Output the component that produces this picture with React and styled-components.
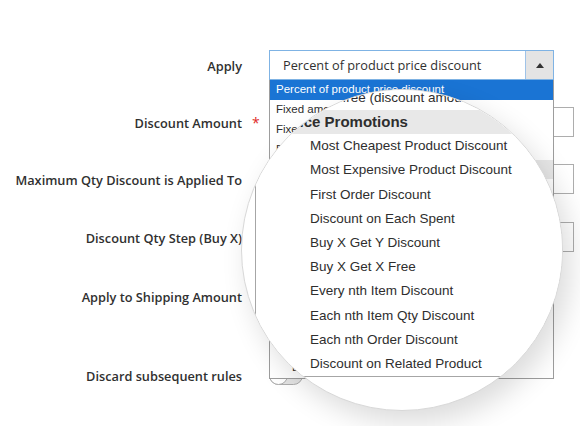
import React from "react";
import styled, { createGlobalStyle } from "styled-components";

const GlobalStyle = createGlobalStyle`
  html, body {
    margin: 0;
    padding: 0;
    background: #fff;
  }
  body {
    width: 580px;
    height: 426px;
    overflow: hidden;
  }
`;

const actions = [
  { label: "Percent of product price discount", kind: "plain", active: true },
  { label: "Fixed amount discount", kind: "plain" },
  { label: "Fixed amount discount for whole cart", kind: "plain" },
  { label: "Buy X get Y free (discount amount is Y)", kind: "plain" },
  { label: "Special Price Promotions", kind: "group" },
  { label: "Most Cheapest Product Discount", kind: "nested" },
  { label: "Most Expensive Product Discount", kind: "nested" },
  { label: "First Order Discount", kind: "nested" },
  { label: "Discount on Each Spent", kind: "nested" },
  { label: "Buy X Get Y Discount", kind: "nested" },
  { label: "Buy X Get X Free", kind: "nested" },
  { label: "Every nth Item Discount", kind: "nested" },
  { label: "Each nth Item Qty Discount", kind: "nested" },
  { label: "Each nth Order Discount", kind: "nested" },
  { label: "Discount on Related Product", kind: "nested" },
];

// popup list metrics, normal and magnified
const normal = { h: 19.9, fs: 11.5, gfs: 11.5, indent: { plain: 6, group: 6, nested: 22 } };
const zoomed = { h: 24.2, fs: 13.5, gfs: 15, indent: { plain: 12, group: -29, nested: 54 } };

const Page = styled.div`
  position: relative;
  width: 580px;
  height: 426px;
  padding-top: 50px;
  box-sizing: border-box;
  font-family: "Open Sans", "Liberation Sans", sans-serif;
  color: #303030;
`;

const Form = styled.div`
  display: flex;
  flex-direction: column;
`;

const Field = styled.div`
  display: grid;
  grid-template-columns: 242px 27px 305px;
  align-items: center;
  min-height: 30px;
  margin-top: ${(p) => p.$gap || 0}px;
`;

const Label = styled.div`
  padding-top: 2px;
  text-align: right;
  font-size: 12.75px;
  font-weight: 600;
  line-height: 18px;
  white-space: nowrap;
`;

const Mark = styled.span`
  padding-left: 10px;
  color: #e02b27;
  font-size: 14px;
`;

const Select = styled.div`
  position: relative;
  width: 285px;
  height: 30px;
`;

const SelectBox = styled.div`
  display: flex;
  height: 30px;
  box-sizing: border-box;
  border: 1px solid #7fb3e4;
  background: #fff;
`;

const SelectValue = styled.div`
  flex: 1;
  display: flex;
  align-items: center;
  padding-left: 13px;
  font-size: 12.75px;
`;

const SelectArrow = styled.div`
  width: 27px;
  display: flex;
  align-items: center;
  justify-content: center;
  background: #e4e4e4;
  border-left: 1px solid #9fc3e8;

  &::before {
    content: "";
    border-left: 4px solid transparent;
    border-right: 4px solid transparent;
    border-bottom: 5px solid #333;
  }
`;

const Popup = styled.div`
  position: absolute;
  top: 30px;
  left: 0;
  width: 285px;
  box-sizing: border-box;
  border: 1px solid #9d9d9d;
  border-top: 0;
  background: #fff;
  z-index: 2;
`;

const Option = styled.div`
  height: ${(p) => p.$h}px;
  line-height: ${(p) => p.$h}px;
  text-indent: ${(p) => p.$indent}px;
  font-family: "Liberation Sans", Arial, sans-serif;
  font-size: ${(p) => p.$fs}px;
  font-weight: ${(p) => (p.$group ? 700 : 400)};
  white-space: nowrap;
  color: ${(p) => (p.$active ? "#fff" : "#2e2e2e")};
  background: ${(p) => (p.$active ? "#1a74d4" : p.$group ? "#e8e8e8" : "transparent")};
`;

const TextInput = styled.input`
  width: 305px;
  height: 30px;
  box-sizing: border-box;
  border: 1px solid #adadad;
  background: #fff;
  outline: none;
`;

const Toggle = styled.span`
  position: relative;
  display: block;
  width: 34px;
  height: 19px;
  box-sizing: border-box;
  border: 1px solid #adadad;
  border-radius: 10px;
  background: #e3e3e3;

  &::after {
    content: "";
    position: absolute;
    left: -1px;
    top: -1px;
    width: 19px;
    height: 19px;
    box-sizing: border-box;
    border: 1px solid #adadad;
    border-radius: 50%;
    background: #fff;
  }
`;

const Lens = styled.div`
  position: absolute;
  left: 241px;
  top: 89px;
  width: 322px;
  height: 322px;
  box-sizing: border-box;
  border: 1px solid #d8d8d8;
  border-radius: 50%;
  background: #fff;
  overflow: hidden;
  box-shadow: 8px 12px 28px rgba(0, 0, 0, 0.14);
  z-index: 3;
`;

const LensList = styled.div`
  position: absolute;
  left: 13px;
  top: -77.7px;
  width: 420px;
  border: 1px solid #a6a6a6;
  background: #fff;
`;

function Options({ m }) {
  return actions.map((a) => (
    <Option
      key={a.label}
      $h={m.h}
      $fs={a.kind === "group" ? m.gfs : m.fs}
      $indent={m.indent[a.kind]}
      $group={a.kind === "group"}
      $active={a.active}
    >
      {a.label}
    </Option>
  ));
}

export default function App() {
  return (
    <>
      <GlobalStyle />
      <Page>
        <Form>
          <Field>
            <Label>Apply</Label>
            <span />
            <Select>
              <SelectBox>
                <SelectValue>Percent of product price discount</SelectValue>
                <SelectArrow />
              </SelectBox>
              <Popup>
                <Options m={normal} />
              </Popup>
            </Select>
          </Field>
          <Field $gap={27}>
            <Label>Discount Amount</Label>
            <Mark>*</Mark>
            <TextInput readOnly />
          </Field>
          <Field $gap={27}>
            <Label>Maximum Qty Discount is Applied To</Label>
            <span />
            <TextInput readOnly />
          </Field>
          <Field $gap={28}>
            <Label>Discount Qty Step (Buy X)</Label>
            <span />
            <TextInput readOnly />
          </Field>
          <Field $gap={29}>
            <Label>Apply to Shipping Amount</Label>
            <span />
            <Toggle />
          </Field>
          <Field $gap={49}>
            <Label>Discard subsequent rules</Label>
            <span />
            <Toggle />
          </Field>
        </Form>
        <Lens>
          <LensList>
            <Options m={zoomed} />
          </LensList>
        </Lens>
      </Page>
    </>
  );
}
